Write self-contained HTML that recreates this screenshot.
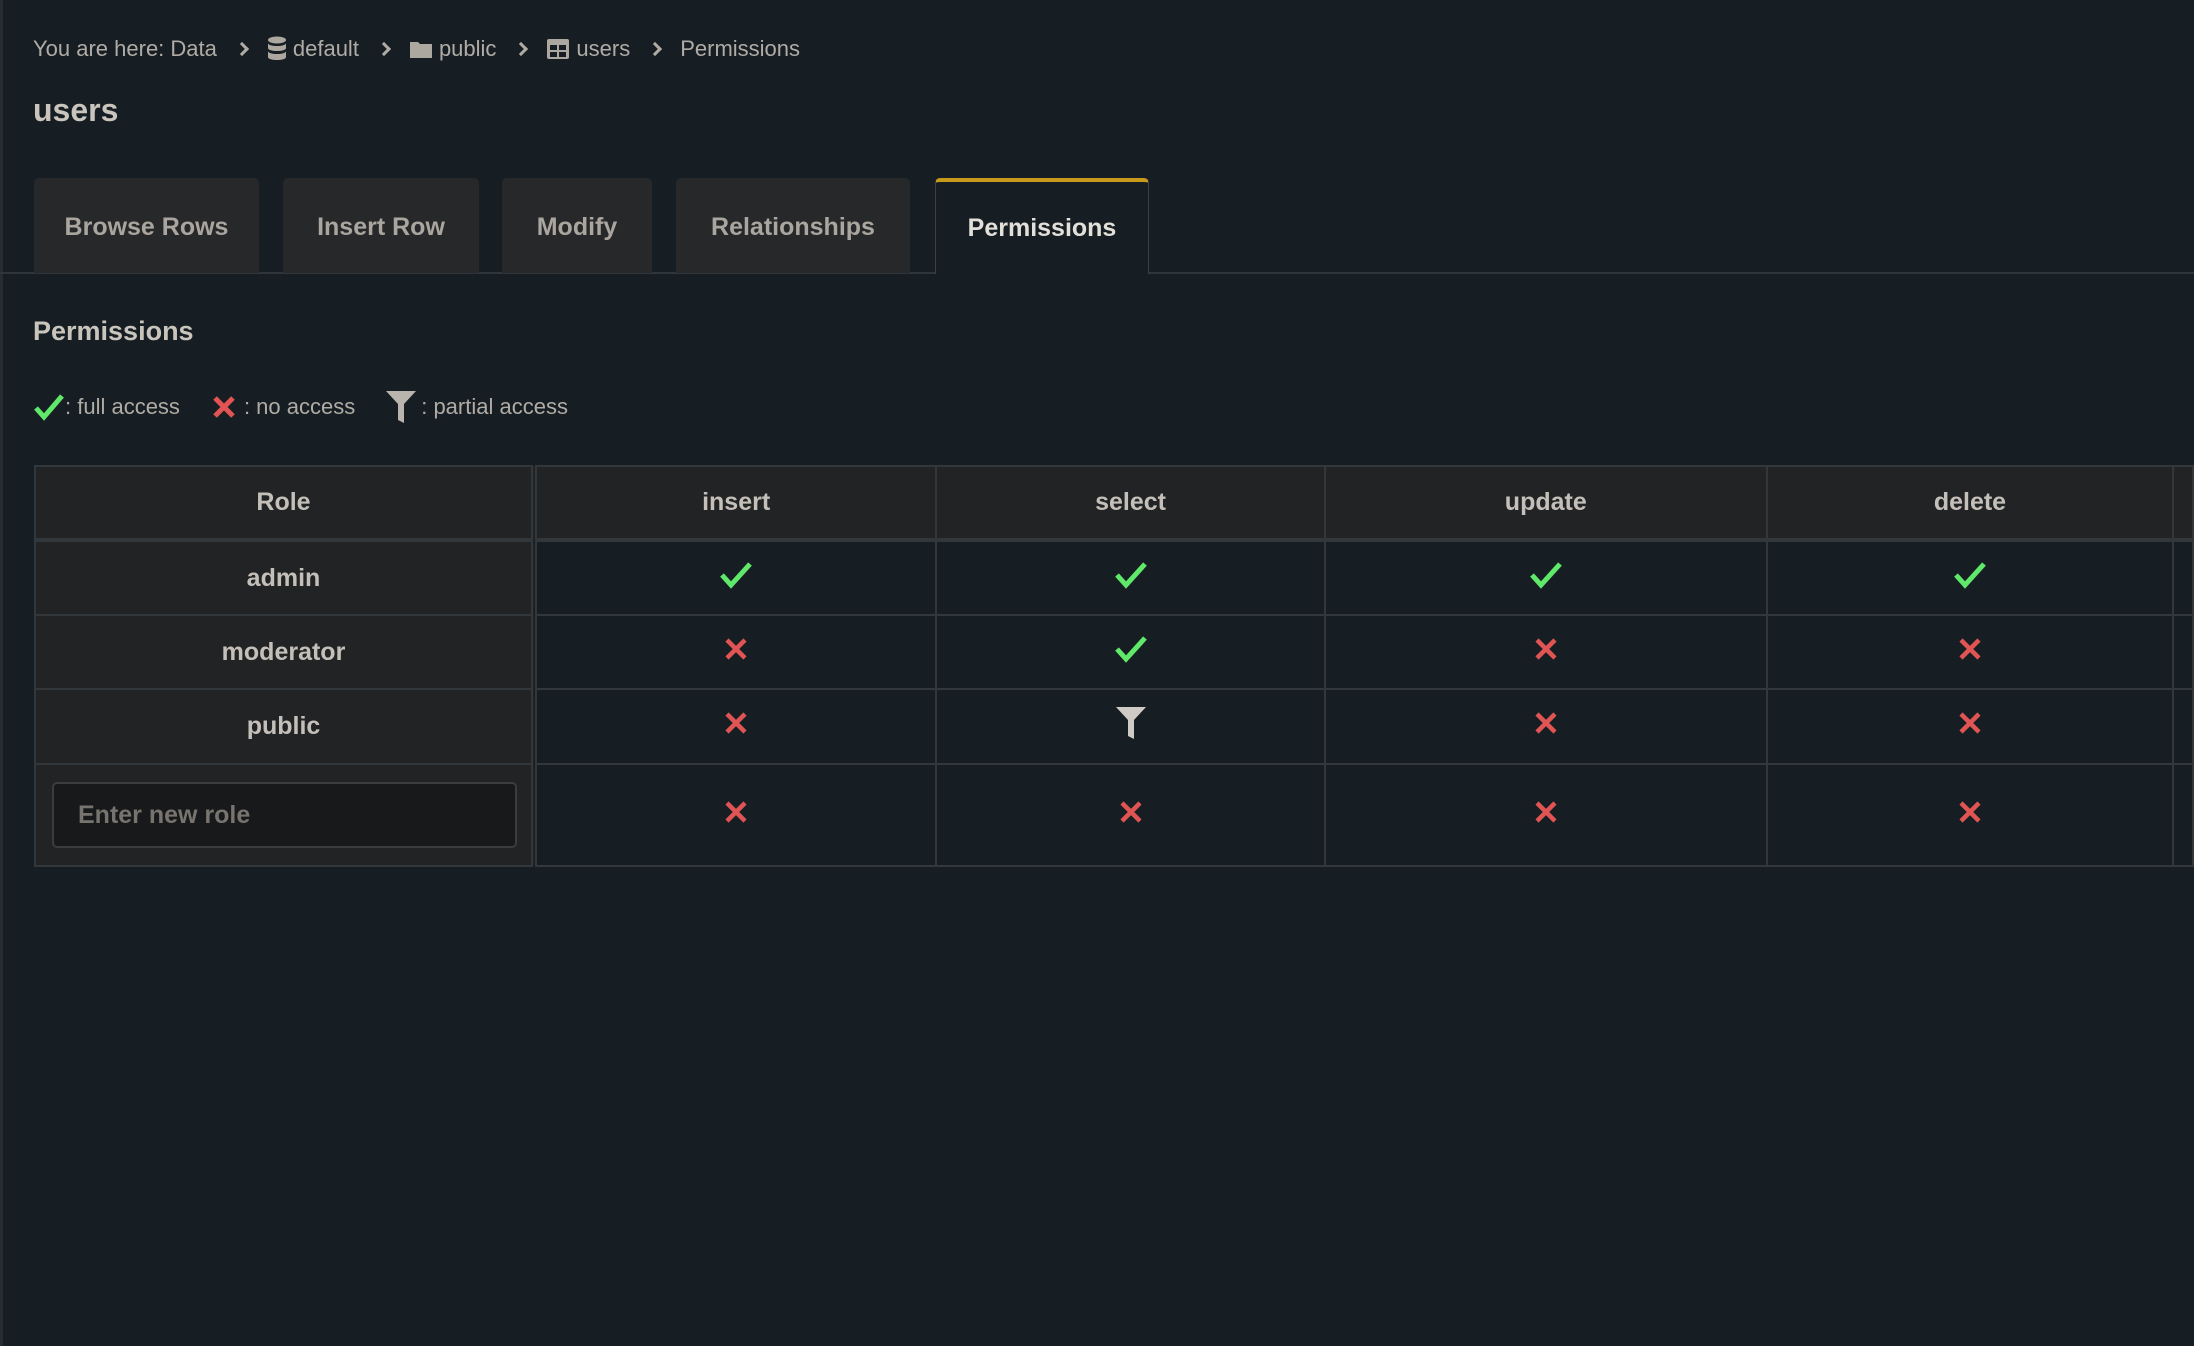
<!DOCTYPE html>
<html><head><meta charset="utf-8"><style>
*{box-sizing:border-box;margin:0;padding:0}
body{width:2194px;height:1346px;background:#161e23;font-family:"Liberation Sans",sans-serif;color:#b9b5ae;position:relative;overflow:hidden}
.abs{position:absolute}
.bc{top:36px;left:33px;font-size:22px;color:#b0aca5;display:flex;align-items:center;gap:0;white-space:nowrap}
.bc .sep{margin:0 20px 0 20px;display:inline-block;width:10px;height:10px;border-right:3px solid #b0aca5;border-top:3px solid #b0aca5;transform:rotate(45deg)}
.bc svg{margin-right:6px}
h1{position:absolute;top:92px;left:33px;font-size:32px;font-weight:bold;color:#c9c5bd}
.tab{position:absolute;top:178px;height:95px;background:#27282a;border-radius:5px 5px 0 0;font-size:25px;font-weight:bold;color:#aaa69f;display:flex;align-items:center;justify-content:center;padding-top:4px}
.tab.act{background:#161e23;border:1px solid #3a4045;border-top:4px solid #c79a1c;border-bottom:none;color:#e3e0da;height:96px;padding-top:0}
.line{position:absolute;top:272px;left:0;width:2194px;height:2px;background:#2f363b}
h2{position:absolute;top:316px;left:33px;font-size:27px;font-weight:bold;color:#c9c5bd}
.leg{position:absolute;top:390px;left:33px;font-size:22px;display:flex;align-items:center;color:#b0aca5}
table{position:absolute;top:465px;left:34px;border-collapse:collapse}
td{border:2px solid #31373b;text-align:center;font-size:25px;font-weight:bold;color:#c4c0b9}
tr.h td{background:#222325;height:74px;border-bottom:4px solid #31373b}
td.r{background:#222325;width:502px;border-right:6px double #31373b}
</style></head><body>
<div class="abs" style="left:0;top:0;width:3px;height:1346px;background:#262c30"></div>
<div class="abs bc">You are here: Data<span class="sep"></span>
<svg width="20" height="26" viewBox="0 0 20 26"><ellipse cx="10" cy="4" rx="9" ry="3.5" fill="#aca79f"/><path d="M1 7c0 4 18 4 18 0v5c0 4-18 4-18 0zM1 15c0 4 18 4 18 0v6c0 4-18 4-18 0z" fill="#aca79f"/></svg>default<span class="sep"></span>
<svg width="24" height="20" viewBox="0 0 24 20"><path d="M1 3h8l2 2h12v14H1z" fill="#aca79f"/></svg>public<span class="sep"></span>
<svg width="24" height="22" viewBox="0 0 24 22"><rect x="1" y="1" width="22" height="20" rx="2" fill="#aca79f"/><rect x="4" y="7" width="7" height="5" fill="#161e23"/><rect x="13" y="7" width="7" height="5" fill="#161e23"/><rect x="4" y="14" width="7" height="5" fill="#161e23"/><rect x="13" y="14" width="7" height="5" fill="#161e23"/></svg>users<span class="sep"></span>Permissions</div>
<h1>users</h1>
<div class="line"></div>
<div class="tab" style="left:34px;width:225px">Browse Rows</div>
<div class="tab" style="left:283px;width:196px">Insert Row</div>
<div class="tab" style="left:502px;width:150px">Modify</div>
<div class="tab" style="left:676px;width:234px">Relationships</div>
<div class="tab act" style="left:935px;width:214px">Permissions</div>
<h2>Permissions</h2>
<div class="leg">
<svg width="32" height="28" viewBox="0 0 32 28"><path d="M3 15l8 9L29 3" stroke="#5fe86a" stroke-width="5" fill="none"/></svg>: full access
<svg style="margin-left:32px;margin-right:8px" width="24" height="24" viewBox="0 0 24 24"><path d="M3 3l18 18M21 3L3 21" stroke="#e05454" stroke-width="5"/></svg>: no access
<svg style="margin-left:30px;margin-right:4px" width="32" height="34" viewBox="0 0 32 34"><path d="M1 1h30L19 14v19l-6-3V14z" fill="#b9b5ae"/></svg>: partial access
</div>
<table>
<tr class="h"><td class="r">Role</td><td style="width:405px">insert</td><td style="width:391px">select</td><td style="width:445px">update</td><td style="width:409px">delete</td><td style="width:20px"></td></tr>
<tr style="height:75px"><td class="r">admin</td><td>CK</td><td>CK</td><td>CK</td><td>CK</td><td></td></tr>
<tr style="height:74px"><td class="r">moderator</td><td>XX</td><td>CK</td><td>XX</td><td>XX</td><td></td></tr>
<tr style="height:75px"><td class="r">public</td><td>XX</td><td>FL</td><td>XX</td><td>XX</td><td></td></tr>
<tr style="height:102px"><td class="r"><div style="margin:0 14px 0 16px;height:66px;background:#18191b;border:2px solid #3a3d40;border-radius:5px;text-align:left;padding-left:24px;line-height:62px;color:#77736e;font-size:25px">Enter new role</div></td><td>XX</td><td>XX</td><td>XX</td><td>XX</td><td></td></tr>
</table>
<script>
var CK='<svg width="36" height="28" viewBox="0 0 36 28"><path d="M4 14l9 10L32 3" stroke="#5fe86a" stroke-width="5" fill="none"/></svg>';
var XX='<svg width="24" height="24" viewBox="0 0 24 24"><path d="M3 3l18 18M21 3L3 21" stroke="#e05454" stroke-width="4.5"/></svg>';
var FL='<svg width="34" height="34" viewBox="0 0 32 34"><path d="M1 1h30L19 14v19l-6-3V14z" fill="#cfcbc4"/></svg>';
document.querySelectorAll('td').forEach(function(t){var s=t.textContent.trim();if(s=='CK')t.innerHTML=CK;else if(s=='XX')t.innerHTML=XX;else if(s=='FL')t.innerHTML=FL;});
</script>
</body></html>
